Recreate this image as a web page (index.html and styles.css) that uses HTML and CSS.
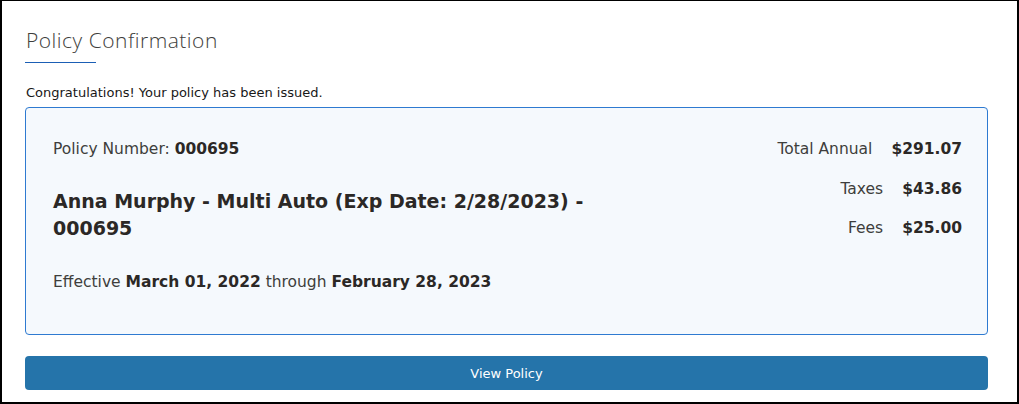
FILE: index.html
```html
<!DOCTYPE html>
<html>
<head>
<meta charset="utf-8">
<link rel="stylesheet" href="styles.css">
</head>
<body>
<div class="frame">
  <div class="header">
    <h1 class="title">Policy Confirmation</h1>
    <div class="title-rule"></div>
  </div>
  <p class="message">Congratulations! Your policy has been issued.</p>
  <div class="card">
    <div class="card-left">
      <div class="line">Policy Number: <b>000695</b></div>
      <h2 class="policy-name">Anna Murphy - Multi Auto (Exp Date: 2/28/2023) - 000695</h2>
      <div class="line">Effective <b>March 01, 2022</b> through <b>February 28, 2023</b></div>
    </div>
    <div class="card-right">
      <div class="amount-row"><span class="amount-label">Total Annual</span><b class="amount-value">$291.07</b></div>
      <div class="amount-row"><span class="amount-label">Taxes</span><b class="amount-value">$43.86</b></div>
      <div class="amount-row"><span class="amount-label">Fees</span><b class="amount-value">$25.00</b></div>
    </div>
  </div>
  <button class="btn">View Policy</button>
</div>
</body>
</html>
```

FILE: styles.css
```css
* { box-sizing: border-box; }
html, body { margin: 0; padding: 0; background: #fff; }
body {
  font-family: "DejaVu Sans", "Open Sans", Arial, sans-serif;
  color: #3e3e3c;
}
.frame {
  width: 1019px;
  height: 404px;
  border-style: solid;
  border-color: #000;
  border-width: 1px 2px 2px 2px;
  padding: 27px 29px 0 23px;
}
.header { display: flex; flex-direction: column; }
.title {
  margin: 0;
  font-family: "Open Sans", "Noto Sans", sans-serif;
  font-size: 21px;
  line-height: 25px;
  font-weight: 300;
  letter-spacing: 0.5px;
  color: #3e3e3c;
  padding-left: 1px;
}
.title-rule {
  width: 71px;
  height: 1px;
  background: #1b5fb5;
  margin-top: 9px;
}
.message {
  margin: 21px 0 0 1px;
  font-size: 13px;
  line-height: 18px;
  color: #181818;
}
.card {
  margin-top: 5px;
  height: 228px;
  border: 1px solid #2e7ad1;
  border-radius: 4px;
  background: #f5f9fd;
  padding: 31px 25px 0 27px;
  display: flex;
  justify-content: space-between;
}
.card-left { width: 560px; }
.line {
  font-size: 15.5px;
  line-height: 20px;
  color: #3e3e3c;
}
.line b, .amount-value { font-weight: 700; color: #2b2826; }
.policy-name {
  margin: 29px 0 30px;
  font-size: 19px;
  line-height: 27px;
  font-weight: 700;
  color: #2b2826;
}
.card-right {
  display: flex;
  flex-direction: column;
  align-items: flex-end;
  gap: 19.5px;
}
.amount-row {
  display: flex;
  gap: 19px;
  font-size: 15.5px;
  line-height: 20px;
}
.btn {
  display: block;
  width: 963px;
  margin-top: 21px;
  height: 34px;
  border: none;
  border-radius: 4px;
  background: #2574aa;
  color: #fff;
  font-family: "DejaVu Sans", "Open Sans", Arial, sans-serif;
  font-size: 13px;
  font-weight: 400;
}
```
